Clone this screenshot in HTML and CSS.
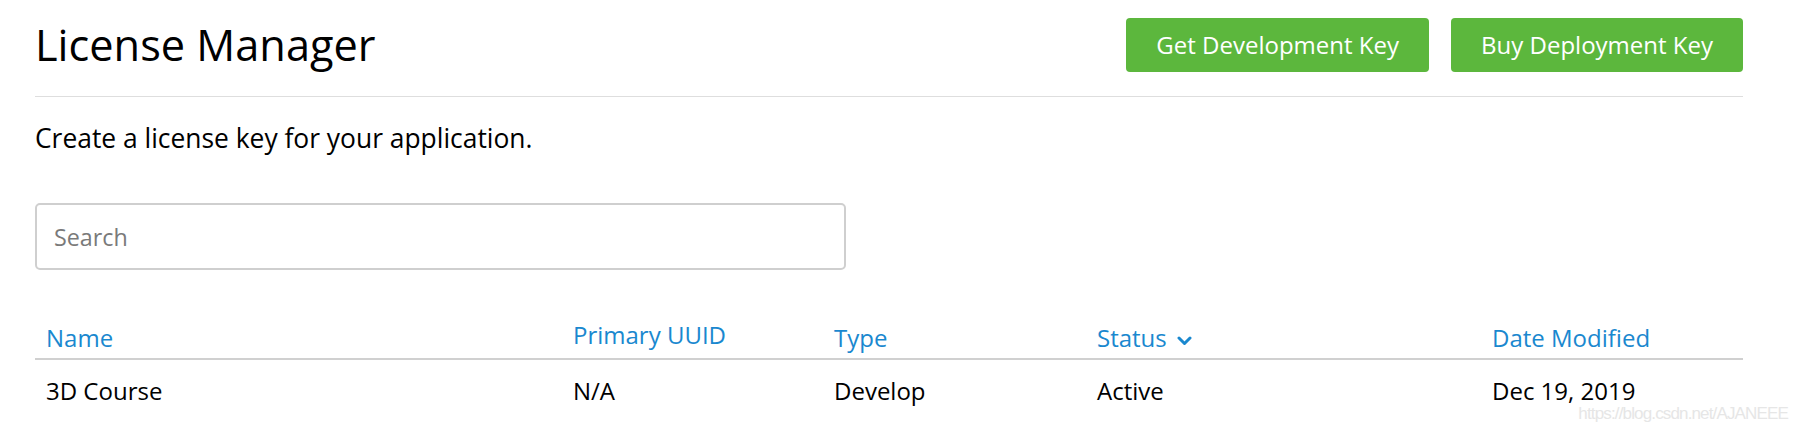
FILE: index.html
```html
<!DOCTYPE html>
<html lang="en">
<head>
<meta charset="utf-8">
<title>License Manager</title>
<link rel="stylesheet" href="styles.css">
</head>
<body>
<div class="page">
  <header class="top">
    <h1 class="title">License Manager</h1>
    <div class="actions">
      <button class="btn" type="button">Get Development Key</button>
      <button class="btn" type="button">Buy Deployment Key</button>
    </div>
  </header>
  <p class="lead">Create a license key for your application.</p>
  <input class="search" type="text" placeholder="Search">
  <table class="keys">
    <colgroup>
      <col class="c-name">
      <col class="c-uuid">
      <col class="c-type">
      <col class="c-status">
      <col class="c-date">
    </colgroup>
    <thead>
      <tr>
        <th>Name</th>
        <th class="th-uuid">Primary UUID</th>
        <th>Type</th>
        <th>Status<svg class="chev" width="15" height="10" viewBox="0 0 15 10"><path d="M2 2 L7.5 7.5 L13 2" fill="none" stroke="currentColor" stroke-width="3" stroke-linecap="round" stroke-linejoin="round"/></svg></th>
        <th>Date Modified</th>
      </tr>
    </thead>
    <tbody>
      <tr>
        <td>3D Course</td>
        <td>N/A</td>
        <td>Develop</td>
        <td>Active</td>
        <td>Dec 19, 2019</td>
      </tr>
    </tbody>
  </table>
</div>
<div class="watermark">https://blog.csdn.net/AJANEEE</div>
</body>
</html>
```

FILE: styles.css
```css
html, body {
  margin: 0;
  padding: 0;
  background: #fff;
}
body {
  font-family: "Open Sans", "Noto Sans", sans-serif;
  color: #000;
  position: relative;
  min-height: 434px;
}
.page {
  width: 1708px;
  padding-left: 35px;
}
.top {
  display: flex;
  justify-content: space-between;
  align-items: flex-start;
  padding-top: 18px;
  padding-bottom: 24px;
  border-bottom: 1px solid #dedede;
}
.title {
  margin: 0;
  font-size: 43.3px;
  font-weight: 400;
  line-height: 53px;
  letter-spacing: 0;
}
.actions {
  display: flex;
  gap: 22px;
}
.btn {
  height: 54px;
  padding: 0 30px;
  border: 0;
  border-radius: 4px;
  background: #5cb73d;
  color: #fff;
  font-family: "Open Sans", "Noto Sans", sans-serif;
  font-size: 24px;
  line-height: 54px;
}
.lead {
  margin: 24px 0 0;
  font-size: 26.4px;
  line-height: 34px;
}
.search {
  display: block;
  box-sizing: border-box;
  width: 811px;
  height: 67px;
  margin-top: 48px;
  padding: 0 17px;
  border: 2px solid #cfcfcf;
  border-radius: 5px;
  font-family: "Open Sans", "Noto Sans", sans-serif;
  font-size: 23.3px;
  color: #000;
  outline: none;
}
.search::placeholder {
  color: #7a7a7a;
}
.keys {
  width: 1708px;
  margin-top: 44px;
  border-collapse: collapse;
  table-layout: fixed;
  font-size: 24px;
  line-height: 30px;
}
.c-name { width: 527px; }
.c-uuid { width: 261px; }
.c-type { width: 263px; }
.c-status { width: 395px; }
.c-date { width: 262px; }
.keys th {
  text-align: left;
  font-weight: 400;
  color: #1a88cf;
  padding: 9px 11px 5px;
  border-bottom: 2px solid #d0d0d0;
  vertical-align: top;
  white-space: nowrap;
}
.keys th.th-uuid {
  padding-top: 6px;
  padding-bottom: 8px;
}
.chev {
  margin-left: 10px;
  vertical-align: 1px;
}
.keys td {
  padding: 16px 11px 0;
}
.watermark {
  position: absolute;
  right: 19px;
  top: 404px;
  font-family: "Liberation Sans", Arial, sans-serif;
  font-size: 17px;
  letter-spacing: -0.85px;
  color: #e6e6e6;
}
```
